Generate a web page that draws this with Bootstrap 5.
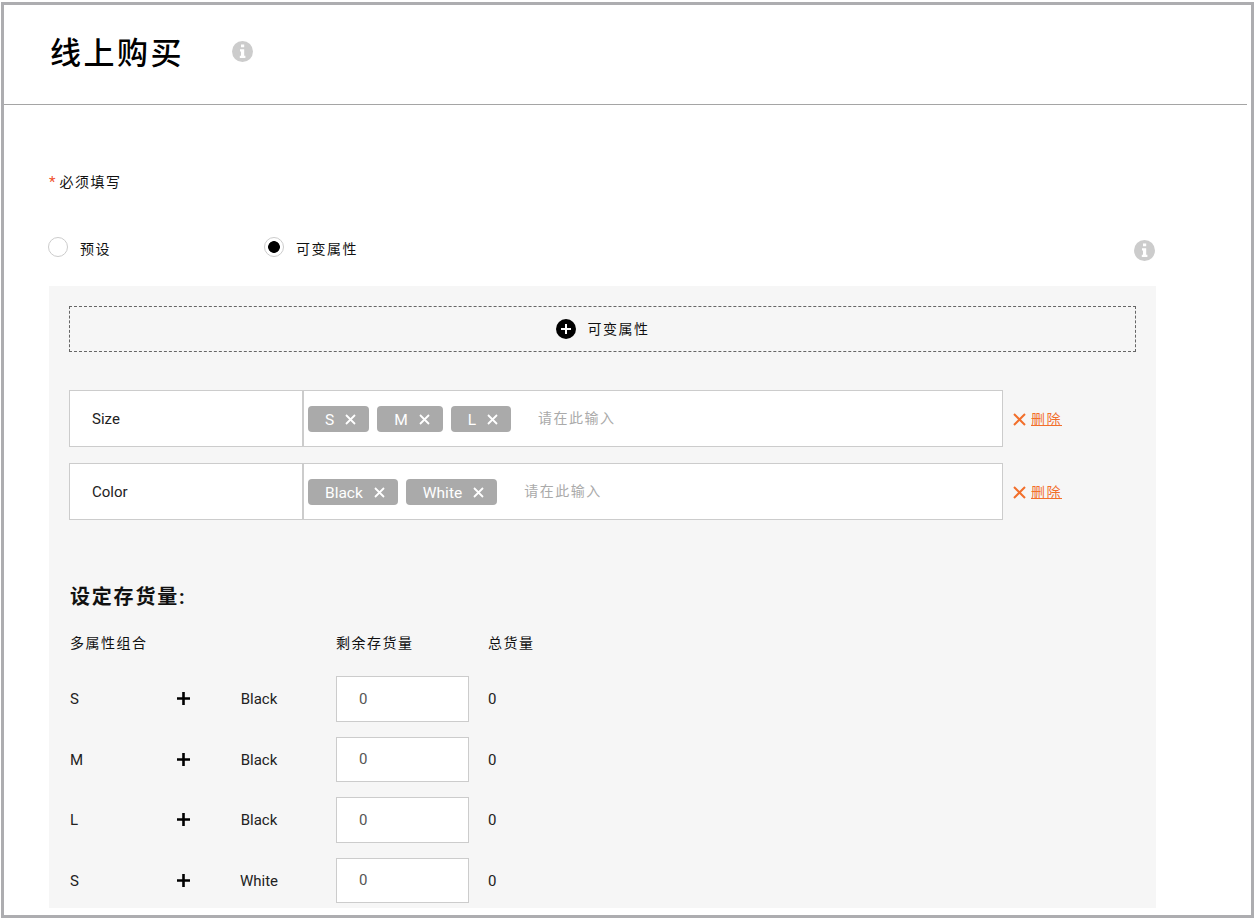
<!DOCTYPE html>
<html lang="zh-CN">
<head>
    <meta charset="UTF-8">
    <meta name="viewport" content="width=device-width, initial-scale=1.0">
    <title>线上购买</title>
    <link href="https://cdn.jsdelivr.net/npm/bootstrap@5.3.0/dist/css/bootstrap.min.css" rel="stylesheet">
    <style>
        html, body {
            height: 919px;
            overflow: hidden;
        }
        body {
            font-family: Roboto, "Noto Sans CJK SC", sans-serif;
            font-size: 15px;
            color: #111;
            background: #fff;
        }
        .page-frame {
            margin: 2px 0 0 1px;
            height: 916px;
            border: 3px solid #adadb0;
            overflow: hidden;
        }
        .page-head {
            height: 100px;
            margin-right: 4px;
            padding-left: 46px;
            padding-bottom: 6px;
            border-bottom: 1px solid #a5a5a5;
        }
        .page-head h1 {
            font-size: 31px;
            font-weight: 500;
            letter-spacing: 2.5px;
            margin: 4px 48px 0 0;
            color: #000;
        }
        .cjk {
            font-size: 14px;
            letter-spacing: 1.5px;
        }
        .required-line {
            margin: 65px 0 0 45px;
            height: 24px;
        }
        .required-line .star {
            color: #f0502d;
            margin-right: 4px;
        }
        .choice-line {
            margin: 43px 0 0 44px;
            width: 1107px;
            height: 24px;
        }
        .choice-line > svg {
            margin-top: 2px;
        }
        .choice-item {
            width: 216px;
        }
        .choice-item .form-check-input {
            width: 20px;
            height: 20px;
            margin: -4px 12px 0 0;
            border: 1px solid #ccc;
            background-color: #fff;
            box-shadow: none;
        }
        .choice-item .form-check-input:checked {
            background-image: radial-gradient(circle, #000 0, #000 5.5px, transparent 6.2px);
        }
        .stock-panel {
            margin: 25px 0 0 45px;
            width: 1107px;
            height: 622px;
            padding: 20px;
            background: #f6f6f6;
        }
        .add-box {
            height: 46px;
            width: 1067px;
            border: 1px dashed #666;
            margin-bottom: 38px;
            gap: 12px;
        }
        .attr-row {
            height: 57px;
            margin-bottom: 16px;
        }
        .attr-box {
            width: 934px;
            height: 57px;
            border: 1px solid #ccc;
            background: #fff;
        }
        .attr-name {
            width: 234px;
            padding: 2px 0 0 22px;
            border-right: 2px solid #ccc;
            height: 100%;
            color: #222;
        }
        .attr-values {
            padding-left: 4px;
            gap: 8px;
        }
        .attr-tag {
            height: 26px;
            padding: 5px 13px 0 17px;
            gap: 11px;
            border-radius: 4px;
            background: #aaa;
            color: #fff;
            font-size: 15.5px;
        }
        .attr-tag svg {
            margin-top: -3px;
        }
        .attr-values input.form-control {
            width: 150px;
            margin-left: 19px;
            padding: 0;
            border: 0;
            border-radius: 0;
            font-size: 14px;
            letter-spacing: 1.5px;
            background: transparent;
            box-shadow: none;
        }
        .attr-values input.form-control::placeholder {
            color: #aaa;
            opacity: 1;
        }
        .attr-remove {
            margin-left: 10px;
            margin-top: 2px;
            gap: 5px;
            color: #f26f2b;
        }
        .attr-remove a {
            color: #f26f2b;
        }
        .stock-title {
            font-size: 20px;
            font-weight: 700;
            letter-spacing: 1.8px;
            margin: 63px 0 0 1px;
            line-height: 28px;
            color: #111;
        }
        .stock-grid {
            display: grid;
            grid-template-columns: 106px 65px 95px 152px auto;
            row-gap: 15px;
            align-items: center;
            margin: 22px 0 0 1px;
            color: #222;
        }
        .stock-grid .grid-head {
            line-height: 20px;
            margin-bottom: 8px;
            color: #111;
        }
        .stock-grid .span-three {
            grid-column: span 3;
        }
        .stock-grid input.form-control {
            width: 133px;
            height: 45.5px;
            padding: 0 22px;
            border: 1px solid #ccc;
            border-radius: 0;
            color: #555;
            font-size: 15px;
            box-shadow: none;
        }
        .grid-text {
            padding-top: 1px;
        }
        .color-name {
            width: 38px;
            margin-left: -1px;
            white-space: nowrap;
        }
    </style>
</head>
<body>
    <div class="page-frame">
        <div class="page-head d-flex align-items-center">
            <h1>线上购买</h1>
            <svg width="21" height="21" viewBox="0 0 21 21"><circle cx="10.5" cy="10.5" r="10.5" fill="#ccc"/><path fill="#fff" d="M9 3.5h3.2v2.8H9zM8 8.2h4.2v6.6h1.2v2.2H7.8v-2.2H9v-4.4H8z"/></svg>
        </div>

        <div class="required-line d-flex align-items-center"><span class="star">*</span><span class="cjk">必须填写</span></div>

        <div class="choice-line d-flex align-items-center">
            <label class="choice-item d-flex align-items-center"><input class="form-check-input" type="radio" name="mode"><span class="cjk">预设</span></label>
            <label class="choice-item d-flex align-items-center"><input class="form-check-input" type="radio" name="mode" checked><span class="cjk">可变属性</span></label>
            <svg class="ms-auto" width="21" height="21" viewBox="0 0 21 21"><circle cx="10.5" cy="10.5" r="10.5" fill="#ccc"/><path fill="#fff" d="M9 3.5h3.2v2.8H9zM8 8.2h4.2v6.6h1.2v2.2H7.8v-2.2H9v-4.4H8z"/></svg>
        </div>

        <div class="stock-panel">
            <div class="add-box d-flex align-items-center justify-content-center">
                <svg width="20" height="20" viewBox="0 0 20 20"><circle cx="10" cy="10" r="10" fill="#000"/><path stroke="#fff" stroke-width="2" d="M10 5v10M5 10h10"/></svg>
                <span class="cjk">可变属性</span>
            </div>

            <div class="attr-row d-flex align-items-center">
                <div class="attr-box d-flex align-items-center">
                    <div class="attr-name d-flex align-items-center">Size</div>
                    <div class="attr-values d-flex align-items-center">
                        <span class="attr-tag d-flex align-items-center">S <svg width="11" height="11" viewBox="0 0 11 11"><path stroke="#fff" stroke-width="1.8" d="M1 1l9 9M10 1l-9 9"/></svg></span>
                        <span class="attr-tag d-flex align-items-center">M <svg width="11" height="11" viewBox="0 0 11 11"><path stroke="#fff" stroke-width="1.8" d="M1 1l9 9M10 1l-9 9"/></svg></span>
                        <span class="attr-tag d-flex align-items-center">L <svg width="11" height="11" viewBox="0 0 11 11"><path stroke="#fff" stroke-width="1.8" d="M1 1l9 9M10 1l-9 9"/></svg></span>
                        <input class="form-control" type="text" placeholder="请在此输入">
                    </div>
                </div>
                <div class="attr-remove d-flex align-items-center">
                    <svg width="13" height="13" viewBox="0 0 13 13"><path stroke="#f26f2b" stroke-width="2" d="M1 1l11 11M12 1L1 12"/></svg>
                    <a href="#" class="cjk">删除</a>
                </div>
            </div>

            <div class="attr-row d-flex align-items-center">
                <div class="attr-box d-flex align-items-center">
                    <div class="attr-name d-flex align-items-center">Color</div>
                    <div class="attr-values d-flex align-items-center">
                        <span class="attr-tag d-flex align-items-center">Black <svg width="11" height="11" viewBox="0 0 11 11"><path stroke="#fff" stroke-width="1.8" d="M1 1l9 9M10 1l-9 9"/></svg></span>
                        <span class="attr-tag d-flex align-items-center">White <svg width="11" height="11" viewBox="0 0 11 11"><path stroke="#fff" stroke-width="1.8" d="M1 1l9 9M10 1l-9 9"/></svg></span>
                        <input class="form-control" type="text" placeholder="请在此输入">
                    </div>
                </div>
                <div class="attr-remove d-flex align-items-center">
                    <svg width="13" height="13" viewBox="0 0 13 13"><path stroke="#f26f2b" stroke-width="2" d="M1 1l11 11M12 1L1 12"/></svg>
                    <a href="#" class="cjk">删除</a>
                </div>
            </div>

            <div class="stock-title">设定存货量:</div>

            <div class="stock-grid" id="stock-grid">
                <div class="grid-head span-three cjk">多属性组合</div>
                <div class="grid-head cjk">剩余存货量</div>
                <div class="grid-head cjk">总货量</div>
            </div>
        </div>
    </div>

    <script>
        // Stock rows
        const combos = [['S', 'Black'], ['M', 'Black'], ['L', 'Black'], ['S', 'White']];
        const plus = '<svg width="15" height="15" viewBox="0 0 15 15"><path stroke="#000" stroke-width="2.6" d="M7.5 1v13M1 7.5h13"/></svg>';
        document.getElementById('stock-grid').insertAdjacentHTML('beforeend', combos.map(c => `
            <div class="grid-text">${c[0]}</div>
            <div class="d-flex">${plus}</div>
            <div class="grid-text color-name d-flex justify-content-center">${c[1]}</div>
            <div><input class="form-control" type="text" value="0"></div>
            <div class="grid-text">0</div>`).join(''));
    </script>
    <script src="https://cdn.jsdelivr.net/npm/bootstrap@5.3.0/dist/js/bootstrap.bundle.min.js"></script>
</body>
</html>
